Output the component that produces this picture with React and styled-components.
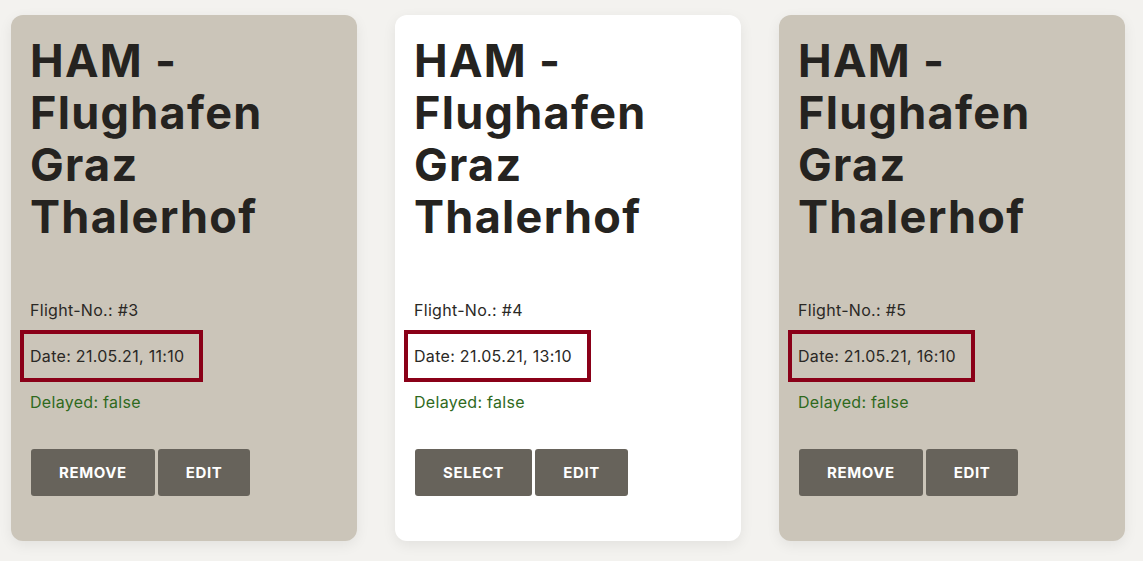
import React from "react";
import styled, { createGlobalStyle } from "styled-components";

const Global = createGlobalStyle`
  html, body { margin: 0; padding: 0; }
  body {
    background: #f3f2ef;
    font-family: Inter, "Noto Sans", "Liberation Sans", sans-serif;
    color: #262420;
  }
`;

const Board = styled.main`
  display: flex;
  gap: 38px;
  padding: 15px 11px;
`;

const Card = styled.article`
  box-sizing: border-box;
  width: 346px;
  height: 526px;
  padding: 20px 19px;
  border-radius: 12px;
  background: ${(p) => (p.$active ? "#ffffff" : "#cbc5b9")};
  box-shadow: 0 4px 14px rgba(0, 0, 0, 0.07);
  display: flex;
  flex-direction: column;
`;

const Title = styled.h2`
  margin: 0 0 44px;
  font-size: 45px;
  line-height: 52px;
  font-weight: 700;
  color: #252320;
  letter-spacing: 1.3px;
`;

const Info = styled.div`
  display: grid;
  grid-template-rows: repeat(3, 46px);
  margin-bottom: 24px;
`;

const Row = styled.div`
  display: flex;
  align-items: center;
  font-size: 16px;
  letter-spacing: 0.3px;
  color: ${(p) => (p.$ok ? "#2f6a1d" : "#2a2825")};
`;

const Highlight = styled.span`
  display: inline-block;
  border: 4px solid #8a0018;
  padding: 12px 15px 12px 6px;
  margin-left: -10px;
`;

const Actions = styled.div`
  display: flex;
  gap: 3px;
  padding-left: 1px;
`;

const Button = styled.button`
  height: 47px;
  padding: 0 28px;
  border: none;
  border-radius: 3px;
  background: #67635b;
  color: #ffffff;
  font-family: inherit;
  font-size: 15px;
  font-weight: 700;
  letter-spacing: 0.6px;
  text-transform: uppercase;
  cursor: pointer;
`;

const flights = [
  { no: 3, time: "11:10", primary: "Remove" },
  { no: 4, time: "13:10", primary: "Select", active: true },
  { no: 5, time: "16:10", primary: "Remove" },
];

export default function App() {
  return (
    <>
      <Global />
      <Board>
        {flights.map((f) => (
          <Card key={f.no} $active={f.active}>
            <Title>
              HAM -<br />
              Flughafen<br />
              Graz<br />
              Thalerhof
            </Title>
            <Info>
              <Row>Flight-No.: #{f.no}</Row>
              <Row>
                <Highlight>Date: 21.05.21, {f.time}</Highlight>
              </Row>
              <Row $ok>Delayed: false</Row>
            </Info>
            <Actions>
              <Button>{f.primary}</Button>
              <Button>Edit</Button>
            </Actions>
          </Card>
        ))}
      </Board>
    </>
  );
}
